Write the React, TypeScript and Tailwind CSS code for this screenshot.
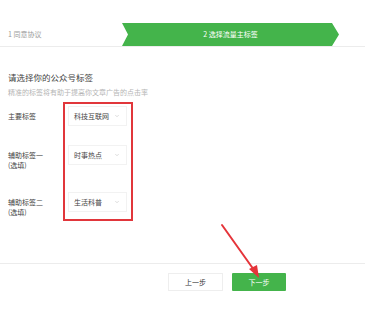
import { ChevronDown } from "lucide-react";

const FONT = { fontFamily: '"Noto Sans CJK SC", "Liberation Sans", sans-serif' };

function Select({ value }: { value: string }) {
  return (
    <div className="h-[20px] w-[59px] flex items-center justify-between pl-[5px] pr-[6px] bg-white border border-[#f2f2f2] text-[7px] text-[#444] whitespace-nowrap">
      <span>{value}</span>
      <ChevronDown className="w-[6px] h-[6px] text-[#bbb]" strokeWidth={2} />
    </div>
  );
}

export default function App() {
  return (
    <div className="relative w-[365px] h-[315px] bg-white overflow-hidden" style={FONT}>
      {/* steps */}
      <div className="pt-[23px] border-b border-[#ececec]">
        <div className="flex h-[23px] items-center">
          <div className="w-[122px] pl-[8px] text-[7px] text-[#999]">1 同意协议</div>
          <div className="w-[217px] h-full bg-[#44b44b] text-white text-[7px] flex items-center justify-center [clip-path:polygon(0_0,210px_0,100%_50%,210px_100%,0_100%,6px_50%)]">
            2 选择流量主标签
          </div>
        </div>
      </div>

      {/* title */}
      <div className="px-[8px] pt-[25px]">
        <div className="text-[8.5px] leading-[11px] text-[#444]">请选择你的公众号标签</div>
        <div className="text-[7px] leading-[10px] text-[#b5b5b5] mt-[4px]">精准的标签将有助于提高你文章广告的点击率</div>
      </div>

      {/* form */}
      <div className="flex pl-[8px] mt-[5px]">
        <div className="w-[55px] flex flex-col text-[7px] leading-[10px] text-[#444] pt-[9px]">
          <div>主要标签</div>
          <div className="mt-[29px]">辅助标签一</div>
          <div>(选填)</div>
          <div className="mt-[27px]">辅助标签二</div>
          <div>(选填)</div>
        </div>
        <div className="w-[70px] border-2 border-[#e1363b] flex flex-col pl-[3px] pt-[2px] pb-[7px]">
          <Select value="科技互联网" />
          <div className="mt-[19px]"><Select value="时事热点" /></div>
          <div className="mt-[27px]"><Select value="生活科普" /></div>
        </div>
      </div>

      {/* footer */}
      <div className="mt-[42px] border-t border-[#ececec] pt-[9px] flex gap-[9px] pl-[168px]">
        <button className="w-[55px] h-[18px] bg-white border border-[#eee] text-[7px] text-[#333]">上一步</button>
        <button className="w-[54px] h-[18px] bg-[#44b44b] text-[7px] text-white rounded-[1px]">下一步</button>
      </div>

      {/* annotation arrow */}
      <svg className="absolute left-0 top-0 pointer-events-none" width="365" height="315">
        <line x1="222" y1="225" x2="254" y2="270" stroke="#e5343a" strokeWidth="2" strokeLinecap="round" />
        <polygon points="259,278 249,269 257,265" fill="#e5343a" />
      </svg>
    </div>
  );
}
